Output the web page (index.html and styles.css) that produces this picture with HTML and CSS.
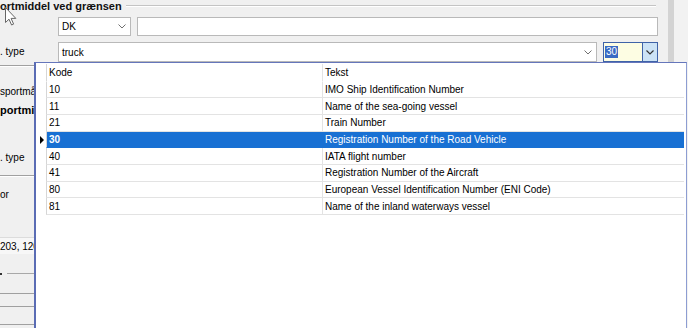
FILE: index.html
```html
<!DOCTYPE html>
<html lang="da">
<head>
<meta charset="utf-8">
<title>Transportmiddel</title>
<link rel="stylesheet" href="styles.css">
</head>
<body>
<div class="page">
  <div class="main">
    <div class="group-head">
      <span class="group-title">ortmiddel ved grænsen</span>
      <span class="group-line"></span>
    </div>
    <div class="row1">
      <div class="combo dk"><span class="val">DK</span><svg class="chev" width="8" height="5" viewBox="0 0 8 5"><path d="M0.5 0.5 L4 4 L7.5 0.5" fill="none" stroke="#707070" stroke-width="1"/></svg></div>
      <div class="textbox"></div>
    </div>
    <div class="row2">
      <span class="lbl">. type</span>
      <div class="combo truck"><span class="val">truck</span><svg class="chev" width="8" height="5" viewBox="0 0 8 5"><path d="M0.5 0.5 L4 4 L7.5 0.5" fill="none" stroke="#707070" stroke-width="1"/></svg></div>
      <div class="combo code">
        <div class="code-text"><span class="hl">30</span></div>
        <div class="code-btn"><svg width="8" height="5" viewBox="0 0 8 5"><path d="M0.5 0.5 L4 4 L7.5 0.5" fill="none" stroke="#333" stroke-width="1.2"/></svg></div>
      </div>
    </div>
    <div class="side">
      <div class="sep s1"></div>
      <div class="slabel l1">sportmå</div>
      <div class="slabel bold l2">portmi</div>
      <div class="slabel l3">. type</div>
      <div class="sep s2"></div>
      <div class="slabel l4">or</div>
      <div class="sbox">203, 120</div>
      <div class="sgroup"><span class="dot"></span><span class="gline"></span></div>
      <div class="hline h1"></div>
      <div class="hline h2"></div>
      <div class="hline h3"></div>
    </div>
  </div>
  <div class="strip"></div>
  <div class="rest"></div>
</div>

<svg class="cursor" width="12" height="19" viewBox="0 0 12 19"><path d="M0.5 0.5 L0.5 15.5 L4 12.2 L6.6 18 L8.6 17.1 L6.1 11.4 L10.8 11.4 Z" fill="#fff" stroke="#666" stroke-width="1"/></svg>

<div class="popup">
  <div class="list">
    <div class="lrow head"><div class="rh"></div><div class="c kode">Kode</div><div class="c tekst">Tekst</div></div>
    <div class="lrow"><div class="rh"></div><div class="c kode">10</div><div class="c tekst">IMO Ship Identification Number</div></div>
    <div class="lrow"><div class="rh"></div><div class="c kode">11</div><div class="c tekst">Name of the sea-going vessel</div></div>
    <div class="lrow"><div class="rh"></div><div class="c kode">21</div><div class="c tekst">Train Number</div></div>
    <div class="lrow sel"><div class="rh"><span class="tri"></span></div><div class="c kode">30</div><div class="c tekst">Registration Number of the Road Vehicle</div></div>
    <div class="lrow"><div class="rh"></div><div class="c kode">40</div><div class="c tekst">IATA flight number</div></div>
    <div class="lrow"><div class="rh"></div><div class="c kode">41</div><div class="c tekst">Registration Number of the Aircraft</div></div>
    <div class="lrow"><div class="rh"></div><div class="c kode">80</div><div class="c tekst">European Vessel Identification Number (ENI Code)</div></div>
    <div class="lrow"><div class="rh"></div><div class="c kode">81</div><div class="c tekst">Name of the inland waterways vessel</div></div>
  </div>
</div>
</body>
</html>
```

FILE: styles.css
```css
html, body {
  margin: 0;
  padding: 0;
}
body {
  width: 688px;
  height: 328px;
  overflow: hidden;
  position: relative;
  background: #f0f0f0;
  font-family: "Liberation Sans", Arial, sans-serif;
  font-size: 10px;
  color: #000;
}
.page {
  display: flex;
  height: 328px;
}
.main {
  width: 668px;
  flex: none;
}
.strip {
  width: 6px;
  flex: none;
  background: #d3d3d3;
}
.rest {
  flex: 1;
  background: #f2f2f2;
}

/* group header */
.group-head {
  display: flex;
  align-items: center;
  height: 12px;
}
.group-title {
  font-weight: bold;
  font-size: 11px;
  line-height: 12px;
  white-space: nowrap;
  color: #111;
}
.group-line {
  flex: 1;
  margin-left: 4px;
  margin-right: 12px;
  border-top: 1px solid #c4c4c4;
  border-bottom: 1px solid #fff;
}

/* rows */
.row1 {
  display: flex;
  gap: 6px;
  margin-top: 5px;
  height: 19px;
  padding-left: 58px;
}
.row2 {
  display: flex;
  margin-top: 6px;
  height: 20px;
}
.lbl {
  width: 58px;
  flex: none;
  line-height: 20px;
  white-space: nowrap;
}
.combo {
  box-sizing: border-box;
  border: 1px solid #b9b9b9;
  background: #fff;
  display: flex;
  align-items: center;
  flex: none;
}
.combo .val {
  flex: 1;
  padding-left: 3px;
}
.combo .chev {
  margin-right: 4px;
}
.dk {
  width: 73px;
}
.truck {
  width: 539px;
}
.textbox {
  box-sizing: border-box;
  width: 521px;
  border: 1px solid #b9b9b9;
  background: #fff;
}
.code {
  width: 55px;
  margin-left: 6px;
  border-color: #3f63a8;
  background: #fdfde3;
  align-items: stretch;
}
.code-text {
  flex: 1;
  display: flex;
  align-items: center;
  padding-left: 1px;
}
.hl {
  background: #3a6bc4;
  color: #fff;
  line-height: 12px;
  padding: 0 1px;
}
.code-btn {
  width: 14px;
  border-left: 1px solid #3f63a8;
  background: #cce3f6;
  display: flex;
  align-items: center;
  justify-content: center;
}

/* left side remnants */
.side {
  width: 34px;
  white-space: nowrap;
}
.sep {
  border-top: 1px solid #a0a0a0;
  border-bottom: 1px solid #fff;
}
.s1 {
  margin-top: 3px;
}
.slabel {
  height: 17px;
  line-height: 17px;
}
.bold {
  font-weight: bold;
  font-size: 11px;
}
.l1 {
  margin-top: 16px;
}
.l2 {
  margin-top: 2px;
}
.l3 {
  margin-top: 30px;
}
.s2 {
  margin-top: 9px;
}
.l4 {
  margin-top: 9px;
}
.sbox {
  margin-top: 34px;
  height: 17px;
  line-height: 17px;
  box-sizing: border-box;
  background: #f7f7f7;
  border-top: 1px solid #dcdcdc;
}
.sgroup {
  margin-top: 18px;
  display: flex;
  align-items: center;
  height: 3px;
}
.dot {
  width: 2px;
  height: 2px;
  background: #333;
}
.gline {
  flex: 1;
  margin-left: 5px;
  border-top: 1px solid #a8a8a8;
}
.hline {
  border-top: 1px solid #a0a0a0;
}
.h1 {
  margin-top: 18px;
}
.h2 {
  margin-top: 12px;
}
.h3 {
  margin-top: 17px;
}

/* mouse cursor */
.cursor {
  position: absolute;
  left: 5px;
  top: 7px;
}

/* dropdown popup */
.popup {
  position: absolute;
  left: 34px;
  top: 62px;
  width: 653px;
  height: 280px;
  box-sizing: border-box;
  background: #fff;
  border-left: 2px solid #5a6cb4;
  border-top: 1px solid #6576bb;
  border-right: 1px solid #8d9dd2;
}
.list {
  display: flex;
  flex-direction: column;
  padding-top: 1px;
}
.lrow {
  display: flex;
  height: 16.7px;
}
.lrow.head {
  height: 17.5px;
}
.rh {
  width: 10px;
  flex: none;
  display: flex;
  align-items: center;
  justify-content: center;
}
.tri {
  width: 0;
  height: 0;
  border-top: 4px solid transparent;
  border-bottom: 4px solid transparent;
  border-left: 4px solid #000;
  margin-left: 2px;
}
.c {
  box-sizing: border-box;
  border-bottom: 1px solid #e3e3e3;
  display: flex;
  align-items: center;
  padding-left: 2px;
  white-space: nowrap;
  overflow: hidden;
}
.kode {
  width: 277px;
  flex: none;
  border-left: 1px solid #d6d6d6;
  border-right: 1px solid #e3e3e3;
}
.tekst {
  width: 361px;
  flex: none;
}
.head .c {
  border-bottom-color: transparent;
}
.sel .c {
  background: #1870d3;
  color: #fff;
  border-bottom-color: #1870d3;
}
.sel .kode {
  font-weight: bold;
  border-right-color: #1870d3;
}
```
